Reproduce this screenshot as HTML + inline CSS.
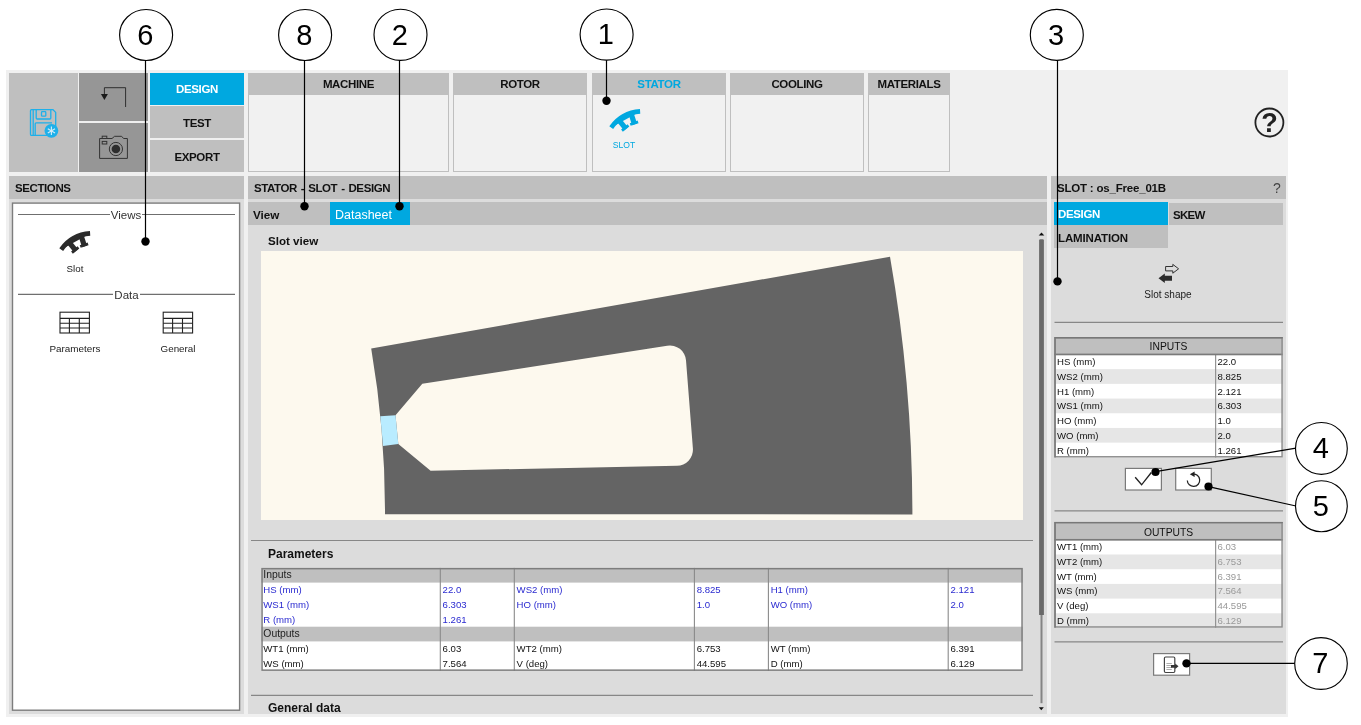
<!DOCTYPE html>
<html lang="en">
<head>
<meta charset="utf-8">
<title>Stator Slot Design</title>
<style>
html,body{margin:0;padding:0;background:#fff;}
body{width:1361px;height:725px;position:relative;overflow:hidden;font-family:"Liberation Sans",sans-serif;font-size:12px;color:#111;}
.a{position:absolute;box-sizing:border-box;}
.g{background:#bfbfbf;}
.dg{background:#969696;}
.bl{background:#00a8e0;}
.lg{background:#dcdcdc;}
.b{font-weight:bold;}
.c{text-align:center;}
.hd{font-weight:bold;font-size:11.5px;letter-spacing:-0.4px;line-height:25px;padding-left:7px;white-space:nowrap;overflow:hidden;}
.grp{border:1px solid #bfbfbf;background:#f1f1f1;}
.gh{font-weight:bold;font-size:11.5px;letter-spacing:-0.35px;text-align:center;line-height:21px;height:21px;background:#bfbfbf;}
.mt{font-weight:bold;font-size:11.5px;letter-spacing:-0.35px;text-align:center;}
table{border-collapse:collapse;table-layout:fixed;font-size:10.5px;}
td{padding:0 0 0 2px;height:14.67px;line-height:14px;white-space:nowrap;overflow:hidden;}
.sep{height:1px;background:#8a8a8a;}
.num{font-size:29px;text-anchor:middle;font-family:"Liberation Sans",sans-serif;fill:#000;}

.rt{border:1px solid #707070;background:#fff;overflow:hidden;}
.rth{background:#bfbfbf;border-bottom:1px solid #707070;text-align:center;font-size:10.3px;line-height:16px;}
.rr{left:0;width:100%;font-size:9.4px;white-space:nowrap;}
.rr span{position:absolute;left:2px;top:0;}
.rr span.v{left:162px;}
.pt{border:1px solid #707070;background:#fff;overflow:hidden;font-size:9.4px;}
.pr{left:0;width:100%;white-space:nowrap;}
.ph{background:#bfbfbf;color:#222;}
.pi{color:#2a2ad0;}
.po{color:#111;}
.tr{font-size:9.6px;line-height:14px;white-space:nowrap;color:#111;}
</style>
</head>
<body>
<div id="root" style="position:absolute;left:0;top:0;width:1361px;height:725px;will-change:transform;">
<!-- app background -->
<div class="a" style="left:6px;top:70px;width:1282px;height:647px;background:#f0f0f0;"></div>

<!-- TOP LEFT -->
<div class="a g" style="left:9px;top:73px;width:69px;height:99px;"></div>
<div class="a dg" style="left:79px;top:73px;width:69px;height:48px;"></div>
<div class="a dg" style="left:79px;top:123px;width:69px;height:49px;"></div>
<div class="a bl mt" style="left:150px;top:73px;width:94px;height:32px;line-height:33px;color:#fff;">DESIGN</div>
<div class="a g mt" style="left:150px;top:106px;width:94px;height:32px;line-height:35px;">TEST</div>
<div class="a g mt" style="left:150px;top:140px;width:94px;height:32px;line-height:34px;">EXPORT</div>

<!-- TOP GROUPS -->
<div class="a grp" style="left:248px;top:73px;width:201px;height:99px;"><div class="gh">MACHINE</div></div>
<div class="a grp" style="left:453px;top:73px;width:134px;height:99px;"><div class="gh">ROTOR</div></div>
<div class="a grp" style="left:592px;top:73px;width:134px;height:99px;"><div class="gh" style="color:#00a8e0;">STATOR</div></div>
<div class="a grp" style="left:730px;top:73px;width:134px;height:99px;"><div class="gh">COOLING</div></div>
<div class="a grp" style="left:868px;top:73px;width:82px;height:99px;"><div class="gh">MATERIALS</div></div>
<div class="a c" style="left:604px;top:139.4px;width:40px;font-size:9.9px;color:#00a8e0;transform:scaleX(.87);">SLOT</div>

<!-- LEFT COLUMN -->
<div class="a lg" style="left:9px;top:176px;width:235px;height:538px;"></div>
<div class="a g hd" style="left:9px;top:176px;width:235px;height:23px;padding-left:6px;">SECTIONS</div>
<svg class="a" style="left:0;top:0;" width="250" height="725" viewBox="0 0 250 725"><rect x="12.5" y="203.1" width="227.1" height="507.1" fill="#fff" stroke="#7d7d7d" stroke-width="1.4"/><path d="M18,214.5 H235 M18,294.4 H235" stroke="#6f6f6f" stroke-width="1.1" fill="none"/></svg>
<div class="a c" style="left:110px;top:209px;width:32px;background:#fff;font-size:11.5px;color:#333;">Views</div>
<div class="a c" style="left:50px;top:263px;width:50px;font-size:9.8px;color:#222;">Slot</div>
<div class="a c" style="left:113px;top:289px;width:27px;background:#fff;font-size:11.5px;color:#333;">Data</div>
<div class="a c" style="left:35px;top:343px;width:80px;font-size:9.9px;color:#222;">Parameters</div>
<div class="a c" style="left:138px;top:343px;width:80px;font-size:9.8px;color:#222;">General</div>

<!-- CENTER COLUMN -->
<div class="a lg" style="left:248px;top:176px;width:799px;height:538px;"></div>
<div class="a g hd" style="left:248px;top:176px;width:799px;height:23px;padding-left:6px;word-spacing:1.1px;">STATOR - SLOT - DESIGN</div>
<div class="a g" style="left:248px;top:202px;width:799px;height:23px;"></div>
<div class="a b" style="left:253px;top:202px;line-height:26px;font-size:11.7px;">View</div>
<div class="a bl" style="left:330px;top:202px;width:80px;height:23px;line-height:26px;font-size:12.5px;color:#fff;padding-left:5px;overflow:hidden;">Datasheet</div>
<div class="a b" style="left:268px;top:234px;font-size:11.6px;">Slot view</div>
<div class="a" style="left:261px;top:251px;width:762px;height:269px;background:#fdf9ee;"></div>
<div class="a b" style="left:268px;top:547px;font-size:12px;">Parameters</div>
<div class="a b" style="left:268px;top:701px;font-size:12px;height:13px;overflow:hidden;">General data</div>

<!-- RIGHT COLUMN -->
<div class="a lg" style="left:1051px;top:176px;width:235px;height:538px;"></div>
<div class="a g hd" style="left:1051px;top:176px;width:235px;height:23px;padding-left:6px;letter-spacing:-0.2px;">SLOT : os_Free_01B</div>
<div class="a" style="left:1273px;top:176px;line-height:24px;font-size:14px;color:#444;">?</div>
<div class="a bl b" style="left:1054px;top:202px;width:114px;height:23px;line-height:24px;color:#fff;padding-left:4px;font-size:11.5px;letter-spacing:-0.35px;overflow:hidden;">DESIGN</div>
<div class="a g b" style="left:1169px;top:203px;width:114px;height:22px;line-height:24px;padding-left:4px;font-size:11.5px;letter-spacing:-0.75px;overflow:hidden;">SKEW</div>
<div class="a g b" style="left:1054px;top:225px;width:114px;height:23px;line-height:27px;padding-left:4px;font-size:11.5px;letter-spacing:-0.13px;overflow:hidden;">LAMINATION</div>
<div class="a c" style="left:1128px;top:289px;width:80px;font-size:10px;color:#222;">Slot shape</div>

<!-- TABLES -->
<svg class="a" style="left:0;top:0;" width="1361" height="725" viewBox="0 0 1361 725">
<rect x="1054.3" y="337.0" width="228.5" height="120.5" fill="#fff"/>
<rect x="1054.3" y="337.0" width="228.5" height="17.45" fill="#bfbfbf"/>
<rect x="1054.3" y="369.15" width="228.5" height="14.70" fill="#e6e6e6"/>
<rect x="1054.3" y="398.55" width="228.5" height="14.70" fill="#e6e6e6"/>
<rect x="1054.3" y="427.95" width="228.5" height="14.70" fill="#e6e6e6"/>
<rect x="1215.1" y="354.45" width="1.1" height="103.05" fill="#8a8a8a"/>
<rect x="1054.3" y="353.60" width="228.5" height="1.7" fill="#7a7a7a"/>
<rect x="1055.02" y="337.73" width="227.05" height="119.05" fill="none" stroke="#8c8c8c" stroke-width="1.45"/>
<path d="M1055.02,457.50 V337.73 H1282.80" fill="none" stroke="#787878" stroke-width="1.45"/>
<rect x="1054.3" y="521.9" width="228.5" height="105.8" fill="#fff"/>
<rect x="1054.3" y="521.9" width="228.5" height="17.90" fill="#bfbfbf"/>
<rect x="1054.3" y="554.50" width="228.5" height="14.70" fill="#e6e6e6"/>
<rect x="1054.3" y="583.90" width="228.5" height="14.70" fill="#e6e6e6"/>
<rect x="1054.3" y="613.30" width="228.5" height="14.40" fill="#e6e6e6"/>
<rect x="1215.1" y="539.80" width="1.1" height="87.90" fill="#8a8a8a"/>
<rect x="1054.3" y="538.95" width="228.5" height="1.7" fill="#7a7a7a"/>
<rect x="1055.02" y="522.62" width="227.05" height="104.35" fill="none" stroke="#8c8c8c" stroke-width="1.45"/>
<path d="M1055.02,627.70 V522.62 H1282.80" fill="none" stroke="#787878" stroke-width="1.45"/>
<rect x="261.3" y="567.9" width="761.5" height="103.0" fill="#fff"/>
<rect x="261.3" y="567.90" width="761.5" height="14.7" fill="#bfbfbf"/>
<rect x="261.3" y="626.70" width="761.5" height="14.7" fill="#bfbfbf"/>
<rect x="439.75" y="567.9" width="1.1" height="103.0" fill="#8a8a8a"/>
<rect x="513.75" y="567.9" width="1.1" height="103.0" fill="#8a8a8a"/>
<rect x="693.85" y="567.9" width="1.1" height="103.0" fill="#8a8a8a"/>
<rect x="767.85" y="567.9" width="1.1" height="103.0" fill="#8a8a8a"/>
<rect x="947.65" y="567.9" width="1.1" height="103.0" fill="#8a8a8a"/>
<rect x="262.05" y="568.65" width="760.00" height="101.50" fill="none" stroke="#7d7d7d" stroke-width="1.5"/>
</svg>
<div class="a c" style="left:1054px;top:340.23px;width:229px;font-size:10.3px;line-height:14px;">INPUTS</div>
<div class="a tr" style="top:355.32px;left:1057px;">HS (mm)</div><div class="a tr" style="top:355.32px;left:1217.5px;color:#111;">22.0</div>
<div class="a tr" style="top:370.02px;left:1057px;">WS2 (mm)</div><div class="a tr" style="top:370.02px;left:1217.5px;color:#111;">8.825</div>
<div class="a tr" style="top:384.72px;left:1057px;">H1 (mm)</div><div class="a tr" style="top:384.72px;left:1217.5px;color:#111;">2.121</div>
<div class="a tr" style="top:399.42px;left:1057px;">WS1 (mm)</div><div class="a tr" style="top:399.42px;left:1217.5px;color:#111;">6.303</div>
<div class="a tr" style="top:414.12px;left:1057px;">HO (mm)</div><div class="a tr" style="top:414.12px;left:1217.5px;color:#111;">1.0</div>
<div class="a tr" style="top:428.82px;left:1057px;">WO (mm)</div><div class="a tr" style="top:428.82px;left:1217.5px;color:#111;">2.0</div>
<div class="a tr" style="top:443.52px;left:1057px;">R (mm)</div><div class="a tr" style="top:443.52px;left:1217.5px;color:#111;">1.261</div>
<div class="a c" style="left:1054px;top:526.03px;width:229px;font-size:10.3px;line-height:14px;">OUTPUTS</div>
<div class="a tr" style="top:540.17px;left:1057px;">WT1 (mm)</div><div class="a tr" style="top:540.17px;left:1217.5px;color:#999;">6.03</div>
<div class="a tr" style="top:554.87px;left:1057px;">WT2 (mm)</div><div class="a tr" style="top:554.87px;left:1217.5px;color:#999;">6.753</div>
<div class="a tr" style="top:569.57px;left:1057px;">WT (mm)</div><div class="a tr" style="top:569.57px;left:1217.5px;color:#999;">6.391</div>
<div class="a tr" style="top:584.27px;left:1057px;">WS (mm)</div><div class="a tr" style="top:584.27px;left:1217.5px;color:#999;">7.564</div>
<div class="a tr" style="top:598.97px;left:1057px;">V (deg)</div><div class="a tr" style="top:598.97px;left:1217.5px;color:#999;">44.595</div>
<div class="a tr" style="top:613.67px;left:1057px;">D (mm)</div><div class="a tr" style="top:613.67px;left:1217.5px;color:#999;">6.129</div>
<div class="a tr" style="top:568.40px;left:263.3px;color:#222;font-size:10.4px;">Inputs</div>
<div class="a tr" style="top:583.37px;left:263.3px;color:#2a2ad0;font-size:9.6px;">HS (mm)</div>
<div class="a tr" style="top:583.37px;left:442.6px;color:#2a2ad0;font-size:9.6px;">22.0</div>
<div class="a tr" style="top:583.37px;left:516.6px;color:#2a2ad0;font-size:9.6px;">WS2 (mm)</div>
<div class="a tr" style="top:583.37px;left:696.7px;color:#2a2ad0;font-size:9.6px;">8.825</div>
<div class="a tr" style="top:583.37px;left:770.7px;color:#2a2ad0;font-size:9.6px;">H1 (mm)</div>
<div class="a tr" style="top:583.37px;left:950.5px;color:#2a2ad0;font-size:9.6px;">2.121</div>
<div class="a tr" style="top:598.07px;left:263.3px;color:#2a2ad0;font-size:9.6px;">WS1 (mm)</div>
<div class="a tr" style="top:598.07px;left:442.6px;color:#2a2ad0;font-size:9.6px;">6.303</div>
<div class="a tr" style="top:598.07px;left:516.6px;color:#2a2ad0;font-size:9.6px;">HO (mm)</div>
<div class="a tr" style="top:598.07px;left:696.7px;color:#2a2ad0;font-size:9.6px;">1.0</div>
<div class="a tr" style="top:598.07px;left:770.7px;color:#2a2ad0;font-size:9.6px;">WO (mm)</div>
<div class="a tr" style="top:598.07px;left:950.5px;color:#2a2ad0;font-size:9.6px;">2.0</div>
<div class="a tr" style="top:612.77px;left:263.3px;color:#2a2ad0;font-size:9.6px;">R (mm)</div>
<div class="a tr" style="top:612.77px;left:442.6px;color:#2a2ad0;font-size:9.6px;">1.261</div>
<div class="a tr" style="top:627.20px;left:263.3px;color:#222;font-size:10.4px;">Outputs</div>
<div class="a tr" style="top:642.17px;left:263.3px;color:#111;font-size:9.6px;">WT1 (mm)</div>
<div class="a tr" style="top:642.17px;left:442.6px;color:#111;font-size:9.6px;">6.03</div>
<div class="a tr" style="top:642.17px;left:516.6px;color:#111;font-size:9.6px;">WT2 (mm)</div>
<div class="a tr" style="top:642.17px;left:696.7px;color:#111;font-size:9.6px;">6.753</div>
<div class="a tr" style="top:642.17px;left:770.7px;color:#111;font-size:9.6px;">WT (mm)</div>
<div class="a tr" style="top:642.17px;left:950.5px;color:#111;font-size:9.6px;">6.391</div>
<div class="a tr" style="top:656.87px;left:263.3px;color:#111;font-size:9.6px;">WS (mm)</div>
<div class="a tr" style="top:656.87px;left:442.6px;color:#111;font-size:9.6px;">7.564</div>
<div class="a tr" style="top:656.87px;left:516.6px;color:#111;font-size:9.6px;">V (deg)</div>
<div class="a tr" style="top:656.87px;left:696.7px;color:#111;font-size:9.6px;">44.595</div>
<div class="a tr" style="top:656.87px;left:770.7px;color:#111;font-size:9.6px;">D (mm)</div>
<div class="a tr" style="top:656.87px;left:950.5px;color:#111;font-size:9.6px;">6.129</div>

<!-- SLOT VIEW DRAWING -->
<svg class="a" style="left:0;top:0;" width="1361" height="725" viewBox="0 0 1361 725">
<path d="M371.2,348.5 L890,256.8 A1491,1491 0 0 1 912.4,514.4 L385,514.3 A964,964 0 0 0 371.2,348.5 Z" fill="#646464"/>
<path d="M395.5,415.2 L422.3,383.8 L667.2,345.7 A16,16 0 0 1 686,360.3 L692.9,448.6 A16,16 0 0 1 676.9,465.7 L430.6,470.7 L398.3,443.9 Z" fill="#fdf9ee"/>
<path d="M380.3,416.3 L395.5,415.2 L398.3,443.9 L383.1,445.9 Z" fill="#b9ecff"/>
</svg>

<!-- ICONS -->
<svg class="a" style="left:0;top:0;" width="1361" height="725" viewBox="0 0 1361 725" fill="none">
<path d="M251,540.5 H1033 M251,695.4 H1033 M1054.5,322.3 H1283 M1054.5,510.9 H1283 M1054.5,641.9 H1283" stroke="#878787" stroke-width="1.2"/>
<!-- save icon -->
<g stroke="#1eb0ea" stroke-width="1.3">
<path d="M31.5,109.7 H53 L55.7,112.4 V134.2 Q55.7,135.4 54.5,135.4 H31.5 Q30.5,135.4 30.5,134.2 V110.8 Q30.5,109.7 31.5,109.7 Z"/>
<path d="M33.2,109.7 V135.4"/>
<path d="M36.2,109.7 V118 Q36.2,119 37.2,119 H49.8 Q50.8,119 50.8,118 V109.7"/>
<rect x="41.5" y="111.6" width="4.3" height="4.6" rx="0.8"/>
<path d="M35.2,135.4 V123.8 Q35.2,122.8 36.2,122.8 H52"/>
</g>
<circle cx="51.4" cy="130.8" r="6.9" fill="#1eb0ea"/>
<g stroke="#d4ecf7" stroke-width="1.15"><path d="M51.4,126.6 V135"/><path d="M47.8,128.7 L55,132.9"/><path d="M55,128.7 L47.8,132.9"/></g>
<!-- back arrow -->
<path d="M104.4,94 V87.7 H125.6 V107" stroke="#222" stroke-width="0.9"/>
<path d="M100.9,94 H107.9 L104.4,99.9 Z" fill="#1a1a1a"/>
<!-- camera -->
<g stroke="#333" stroke-width="1">
<path d="M99.6,138.5 H112 L114.6,136.3 H121.6 L123.6,138.5 H127.4 V158.4 H99.6 Z"/>
<rect x="102.2" y="136.2" width="4.6" height="2.3"/>
<rect x="102.2" y="141.4" width="4.6" height="2.6"/>
<circle cx="115.9" cy="149" r="6.6"/>
</g>
<circle cx="115.9" cy="149" r="4.3" fill="#2d2d2d"/>
<!-- stator icon blue -->
<g transform="translate(642.6,149.7)" fill="#00a8e0">
<path d="M-31.38,-22.13 A38.4,38.4 0 0 1 -2.48,-38.32" stroke="#00a8e0" stroke-width="4.7"/>
<g transform="rotate(-38.7)"><rect x="-2.6" y="-36.6" width="5.2" height="10"/><rect x="-4.15" y="-29.2" width="8.3" height="2.8"/></g>
<g transform="rotate(-17.7)"><rect x="-2.6" y="-36.6" width="5.2" height="10"/><rect x="-4.15" y="-29.2" width="8.3" height="2.8"/></g>
</g>
<!-- stator icon dark -->
<g transform="translate(92.6,271.7)" fill="#2b2b2b">
<path d="M-31.38,-22.13 A38.4,38.4 0 0 1 -2.48,-38.32" stroke="#2b2b2b" stroke-width="4.7"/>
<g transform="rotate(-38.7)"><rect x="-2.6" y="-36.6" width="5.2" height="10"/><rect x="-4.15" y="-29.2" width="8.3" height="2.8"/></g>
<g transform="rotate(-17.7)"><rect x="-2.6" y="-36.6" width="5.2" height="10"/><rect x="-4.15" y="-29.2" width="8.3" height="2.8"/></g>
</g>
<!-- table icons -->
<g stroke="#222" stroke-width="1.1">
<rect x="60" y="312.2" width="29.4" height="20.8"/><path d="M60,318.4 H89.4 M60,323.2 H89.4 M60,328 H89.4 M69.4,318.4 V333 M79.3,318.4 V333"/>
<rect x="163.2" y="312.2" width="29.4" height="20.8"/><path d="M163.2,318.4 H192.6 M163.2,323.2 H192.6 M163.2,328 H192.6 M172.6,318.4 V333 M182.5,318.4 V333"/>
</g>
<!-- slot shape arrows -->
<path d="M1165.6,266.5 H1172.8 V264.4 L1178.6,268.8 L1172.8,273.2 V270.9 H1165.6 Z" stroke="#333" stroke-width="1"/>
<path d="M1158.5,278.2 L1164.8,273.4 V275.7 H1172 V280.8 H1164.8 V283 Z" fill="#2b2b2b"/>
<!-- buttons -->
<g stroke="#7a7a7a" stroke-width="1.2" fill="#fff">
<rect x="1125.4" y="468.4" width="36" height="21.6"/>
<rect x="1175.7" y="468.4" width="35.6" height="21.6"/>
<rect x="1153.6" y="653.6" width="36" height="21.6"/>
</g>
<path d="M1135.2,477.3 L1141.6,484.8 L1151.3,472.5" stroke="#222" stroke-width="1.35"/>
<path d="M1192.6,474.1 A6.2,6.2 0 1 1 1187.3,480.4" stroke="#222" stroke-width="1.25"/>
<path d="M1189.8,474.2 L1194.6,471.5 V476.9 Z" fill="#222"/>
<!-- export icon -->
<rect x="1164.4" y="657" width="10.4" height="15.5" rx="1.2" stroke="#444" stroke-width="1.2"/>
<path d="M1166.4,663.5 H1171.8 M1166.4,665.5 H1171.8 M1166.4,667.5 H1171.8 M1166.4,669.5 H1171.8" stroke="#8a8a8a" stroke-width="0.7"/>
<path d="M1171,664.9 H1175.2 V663.5 L1178.5,666.3 L1175.2,669.1 V667.7 H1171 Z" fill="#333"/>
<!-- help -->
<circle cx="1269.4" cy="122.5" r="14" stroke="#222" stroke-width="1.8"/>
<text x="1269.4" y="132.4" text-anchor="middle" font-family="Liberation Sans, sans-serif" font-weight="bold" font-size="27" fill="#222">?</text>
<!-- scrollbar -->
<path d="M1039.1,615.1 V240.6 Q1039.1,239.3 1040.4,239.3 H1042.6 Q1043.9,239.3 1043.9,240.6 V615.1 Z" fill="#696969"/>
<rect x="1040.5" y="615" width="2" height="88.2" fill="#848484"/>
<path d="M1038.7,235.4 H1044.3 L1041.5,232.4 Z" fill="#111"/>
<path d="M1038.8,707.3 H1043.8 L1041.3,710.3 Z" fill="#111"/>
</svg>

<!-- CALLOUTS -->
<svg class="a" style="left:0;top:0;" width="1361" height="725" viewBox="0 0 1361 725">
<g stroke="#000" stroke-width="1.15" fill="#fff">
<path d="M145.5,60 V241 M304.5,60 V206 M399.5,60 V206 M606.5,60 V100.7 M1057.5,60 V281.4 M1296,448.2 L1155.5,471.6 M1296,506 L1208.4,486.6 M1296,663.4 H1186.5" fill="none" stroke-width="1.2"/>
<ellipse cx="146.1" cy="35" rx="26.5" ry="25.45"/>
<ellipse cx="305.1" cy="35" rx="26.5" ry="25.45"/>
<ellipse cx="400.5" cy="34.8" rx="26.5" ry="25.6"/>
<ellipse cx="606.6" cy="34.6" rx="26.5" ry="25.6"/>
<ellipse cx="1056.8" cy="34.9" rx="26.5" ry="25.5"/>
<ellipse cx="1321.4" cy="448.4" rx="25.9" ry="25.9"/>
<ellipse cx="1321.4" cy="506.2" rx="25.9" ry="25.5"/>
<ellipse cx="1321" cy="663.5" rx="26.3" ry="25.9"/>
</g>
<g fill="#000">
<circle cx="145.5" cy="241.5" r="4.2"/><circle cx="304.5" cy="206.2" r="4.2"/><circle cx="399.5" cy="206.2" r="4.2"/>
<circle cx="606.5" cy="100.7" r="4.2"/><circle cx="1057.5" cy="281.4" r="4.2"/>
<circle cx="1155.5" cy="472" r="4.1"/><circle cx="1208.5" cy="486.5" r="4.1"/><circle cx="1186.5" cy="663.4" r="4.2"/>
</g>
<text class="num" x="145.2" y="44.6">6</text>
<text class="num" x="304.2" y="44.6">8</text>
<text class="num" x="399.8" y="44.6">2</text>
<text class="num" x="605.8" y="44.3">1</text>
<text class="num" x="1056" y="44.6">3</text>
<text class="num" x="1320.8" y="458">4</text>
<text class="num" x="1320.8" y="515.8">5</text>
<text class="num" x="1320.2" y="673.2">7</text>
</svg>

</div>
</body>
</html>
